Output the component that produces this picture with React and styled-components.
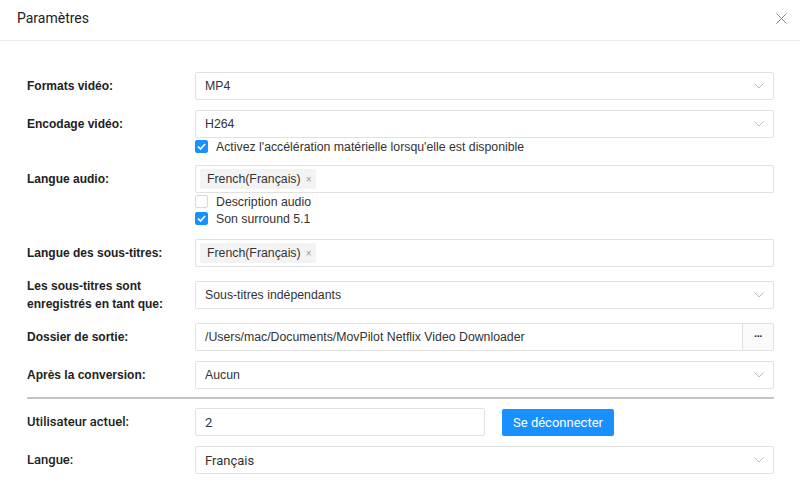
import React from 'react';
import styled, { createGlobalStyle } from 'styled-components';

const GlobalStyle = createGlobalStyle`
  html, body {
    margin: 0;
    padding: 0;
    background: #ffffff;
  }
  body {
    font-family: "Liberation Sans", Arial, sans-serif;
    color: #333;
  }
`;

const Dialog = styled.div`
  width: 800px;
  height: 487px;
  background: #fff;
  overflow: hidden;
`;

const Header = styled.div`
  height: 40px;
  border-bottom: 1px solid #ececec;
  display: flex;
  align-items: center;
  justify-content: space-between;
  padding: 0 12px 0 17px;
  .header__title {
    font-family: Roboto, "Liberation Sans", sans-serif;
    font-size: 14px;
    color: #222;
    margin-top: -4px;
  }
`;

const CloseButton = styled.button`
  border: none;
  background: none;
  padding: 0;
  width: 14px;
  height: 14px;
  display: flex;
  align-items: center;
  justify-content: center;
  margin-top: -3px;
  cursor: pointer;
`;

const Body = styled.div`
  padding: 31px 26px 0 27px;
  display: flex;
  flex-direction: column;
  gap: 10px;
`;

const Row = styled.div`
  display: grid;
  grid-template-columns: 168px 1fr;
  align-items: ${props => (props.$center ? 'center' : 'start')};
`;

const Label = styled.div`
  min-height: 28px;
  display: flex;
  align-items: center;
  font-family: ${props =>
    props.$narrow ? 'Roboto, "Liberation Sans", sans-serif' : '"Liberation Sans", Arial, sans-serif'};
  font-weight: ${props => (props.$narrow ? 500 : 700)};
  font-size: ${props => (props.$narrow ? '13px' : '12px')};
  line-height: 18px;
  color: #222;
`;

const Control = styled.div`
  display: flex;
  flex-direction: column;
  padding-bottom: ${props => props.$extra || '0'};
`;

const Box = styled.div`
  height: 28px;
  box-sizing: border-box;
  border: 1px solid #e1e1e1;
  border-radius: 2px;
  background: #fff;
  display: flex;
  align-items: center;
  padding-left: ${props => (props.$tags ? '4px' : '9px')};
  font-family: ${props =>
    props.$narrow ? 'Roboto, "Liberation Sans", sans-serif' : '"Liberation Sans", Arial, sans-serif'};
  font-size: ${props => (props.$narrow ? '13px' : '12.3px')};
  color: #333;
  overflow: hidden;
  width: ${props => props.$width || 'auto'};
  .box__value {
    flex: 1;
    white-space: nowrap;
  }
`;

const Chevron = styled.span`
  width: 24px;
  display: flex;
  align-items: center;
  justify-content: center;
  margin-right: 2px;
`;

const BrowseButton = styled.span`
  width: 31px;
  height: 100%;
  border-left: 1px solid #e1e1e1;
  background: #fafafa;
  display: flex;
  align-items: center;
  justify-content: center;
  font-size: 11px;
  font-weight: 700;
  color: #333;
  letter-spacing: -1px;
  padding-bottom: 3px;
  box-sizing: border-box;
`;

const Tag = styled.span`
  height: 20px;
  display: inline-flex;
  align-items: center;
  gap: 5px;
  padding: 0 5px 0 7px;
  background: #f3f3f3;
  border-radius: 2px;
  font-size: 12.3px;
  color: #333;
  .tag__close {
    font-size: 10px;
    color: #999;
  }
`;

const CheckLine = styled.label`
  height: 17px;
  display: flex;
  align-items: center;
  gap: 8px;
  font-size: 12.3px;
  color: #333;
`;

const CheckBox = styled.span`
  width: 13px;
  height: 13px;
  box-sizing: border-box;
  border-radius: 2px;
  border: 1px solid ${props => (props.$checked ? '#1890ff' : '#d9d9d9')};
  background: ${props => (props.$checked ? '#1890ff' : '#fff')};
  display: flex;
  align-items: center;
  justify-content: center;
`;

const Divider = styled.div`
  height: 2px;
  background: #c4c4c4;
  margin: -2px 0 -1px;
`;

const UserLine = styled.div`
  display: flex;
  align-items: center;
  gap: 17px;
`;

const PrimaryButton = styled.button`
  height: 27px;
  width: 112px;
  border: none;
  border-radius: 2px;
  background: #1890ff;
  color: #fff;
  font-family: Roboto, "Liberation Sans", sans-serif;
  font-size: 13px;
  padding: 0;
  cursor: pointer;
`;

const ChevronIcon = () => (
  <svg width="10" height="6" viewBox="0 0 10 6">
    <polyline points="0.5,0.5 5,5 9.5,0.5" fill="none" stroke="#bdbdbd" strokeWidth="1" />
  </svg>
);

const CheckIcon = () => (
  <svg width="9" height="7" viewBox="0 0 9 7">
    <polyline points="1,3.5 3.5,6 8,1" fill="none" stroke="#fff" strokeWidth="1.6" />
  </svg>
);

const Select = ({ value, narrow }) => (
  <Box $narrow={narrow}>
    <span className="box__value">{value}</span>
    <Chevron>
      <ChevronIcon />
    </Chevron>
  </Box>
);

const Check = ({ checked, children }) => (
  <CheckLine>
    <CheckBox $checked={checked}>{checked && <CheckIcon />}</CheckBox>
    {children}
  </CheckLine>
);

const LangTag = () => (
  <Tag>
    French(Français)<span className="tag__close">×</span>
  </Tag>
);

const App = () => {
  return (
    <Dialog>
      <GlobalStyle />
      <Header>
        <span className="header__title">Paramètres</span>
        <CloseButton aria-label="Fermer">
          <svg width="11" height="11" viewBox="0 0 11 11">
            <path d="M0.5 0.5 L10.5 10.5 M10.5 0.5 L0.5 10.5" stroke="#888" strokeWidth="1" />
          </svg>
        </CloseButton>
      </Header>
      <Body>
        <Row>
          <Label>Formats vidéo:</Label>
          <Select value="MP4" />
        </Row>
        <Row>
          <Label>Encodage vidéo:</Label>
          <Control>
            <Select value="H264" />
            <Check checked>Activez l'accélération matérielle lorsqu'elle est disponible</Check>
          </Control>
        </Row>
        <Row>
          <Label>Langue audio:</Label>
          <Control $extra="2px">
            <Box $tags>
              <LangTag />
            </Box>
            <Check>Description audio</Check>
            <Check checked>Son surround 5.1</Check>
          </Control>
        </Row>
        <Row>
          <Label>Langue des sous-titres:</Label>
          <Box $tags>
            <LangTag />
          </Box>
        </Row>
        <Row $center>
          <Label>
            Les sous-titres sont
            <br />
            enregistrés en tant que:
          </Label>
          <Select value="Sous-titres indépendants" />
        </Row>
        <Row>
          <Label>Dossier de sortie:</Label>
          <Box>
            <span className="box__value">/Users/mac/Documents/MovPilot Netflix Video Downloader</span>
            <BrowseButton>···</BrowseButton>
          </Box>
        </Row>
        <Row>
          <Label>Après la conversion:</Label>
          <Select value="Aucun" />
        </Row>
        <Divider />
        <Row>
          <Label $narrow>Utilisateur actuel:</Label>
          <UserLine>
            <Box $narrow $width="290px">
              <span className="box__value">2</span>
            </Box>
            <PrimaryButton>Se déconnecter</PrimaryButton>
          </UserLine>
        </Row>
        <Row>
          <Label $narrow>Langue:</Label>
          <Select value="Français" narrow />
        </Row>
      </Body>
    </Dialog>
  );
};

export default App;
